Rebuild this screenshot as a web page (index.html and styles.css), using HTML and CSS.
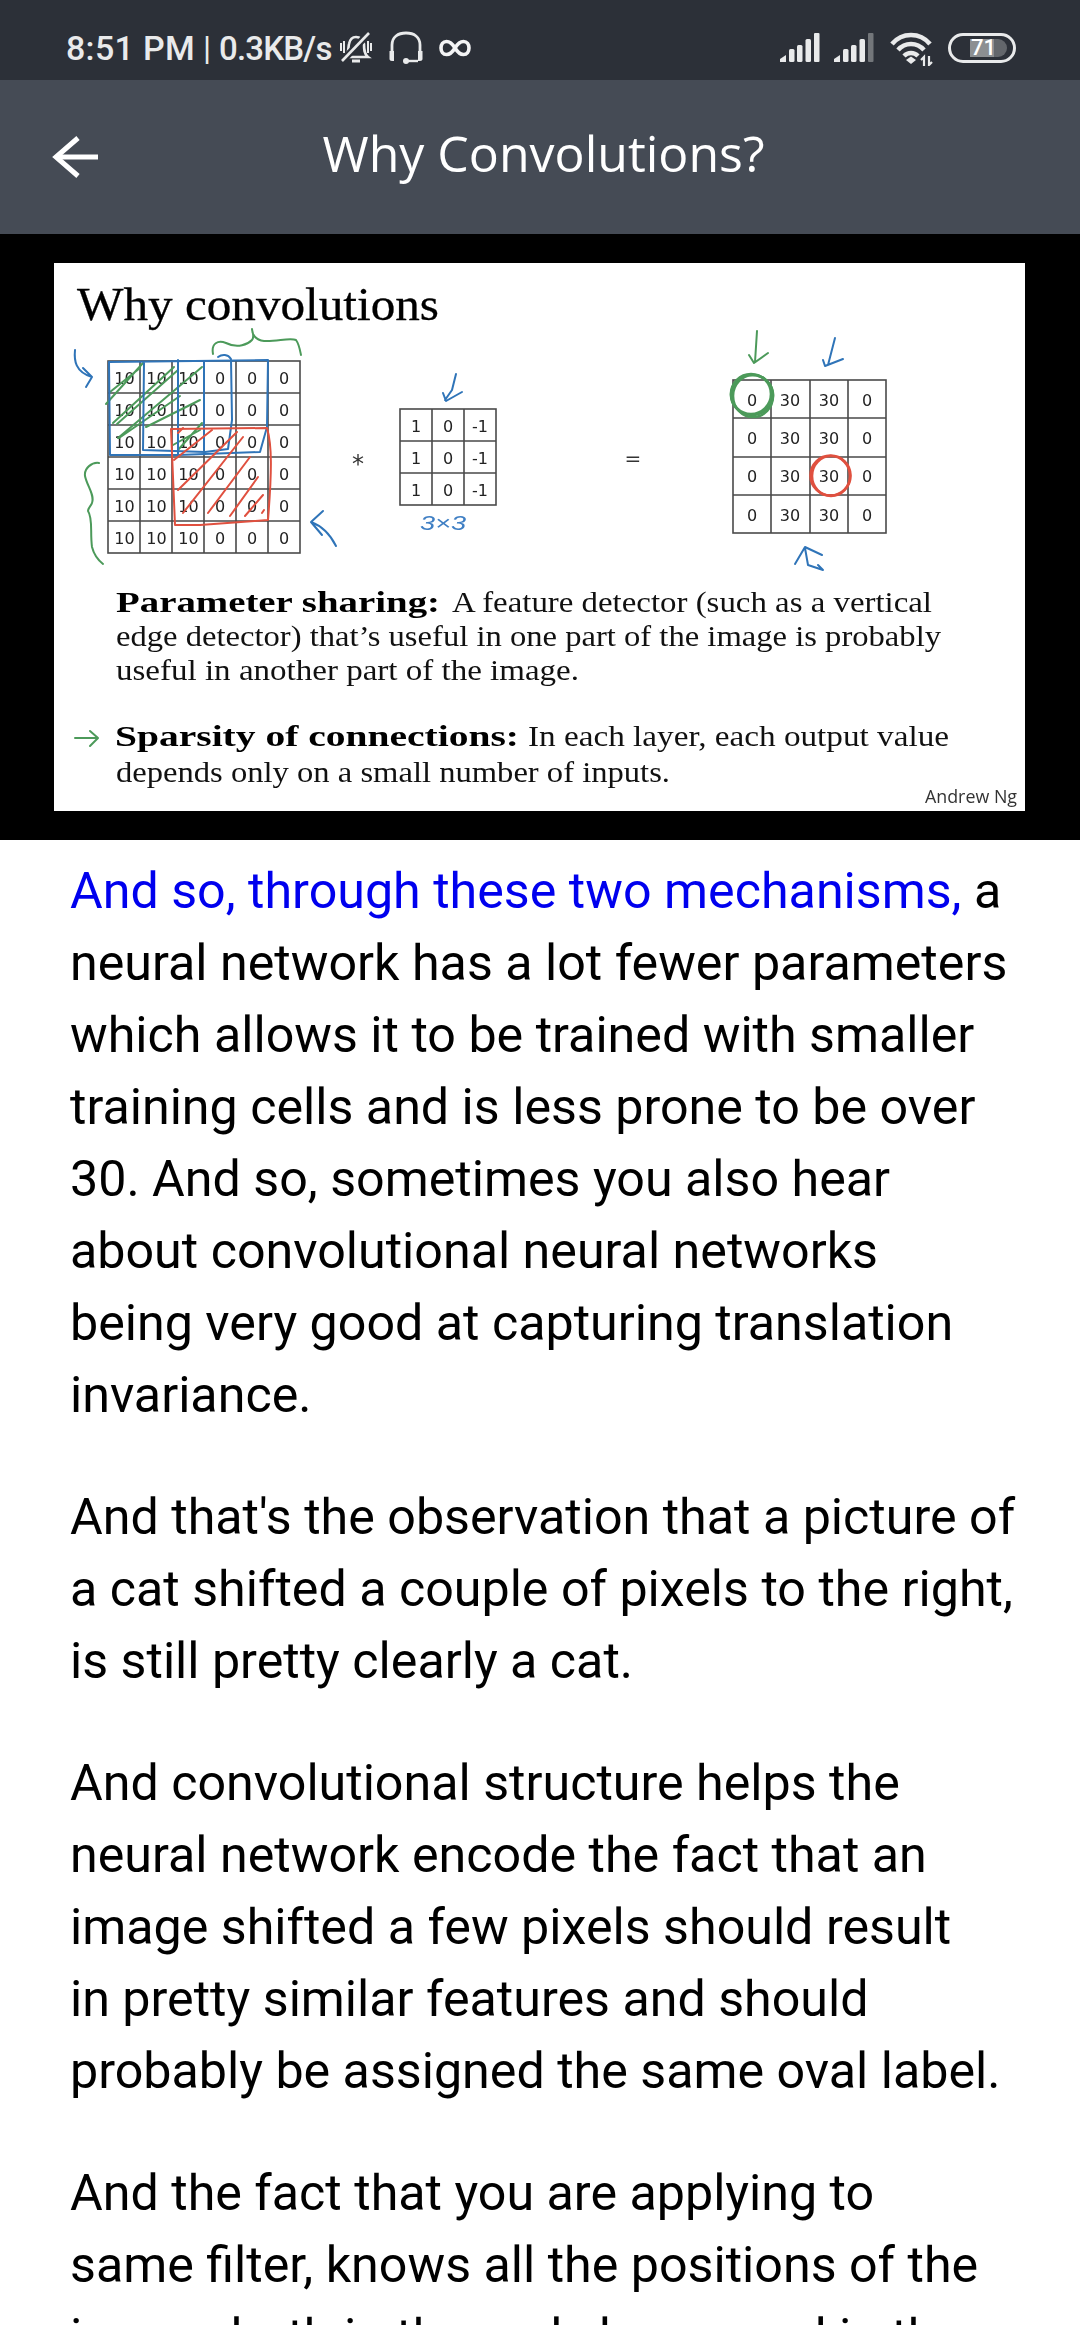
FILE: index.html
```html
<!DOCTYPE html>
<html lang="en">
<head>
    <meta charset="UTF-8">
    <meta name="viewport" content="width=device-width, initial-scale=1.0">
    <title>Why Convolutions?</title>
    <link rel="stylesheet" href="styles.css">
</head>
<body>

    <div class="status-bar">
        <div class="status-left">
            <span class="clock">8:51 PM</span>
            <span class="sep">|</span>
            <span class="speed">0.3KB/s</span>
            <!-- muted bell -->
            <svg class="icon-bell" width="34" height="34" viewBox="0 0 34 34" fill="none" stroke="#e9eaeb" stroke-width="2.6">
                <path d="M6 26 C10 23 9 17 10 13 C11 8 14 6 17 6 C21 6 24 9 25 13 C25 18 25 23 29 26 Z"/>
                <path d="M13 30 H21" stroke-width="3"/>
                <path d="M2 12 V20 M5 10 V22 M29 10 V22 M32 12 V20" stroke-width="2"/>
                <path d="M3 30 L30 2" stroke="#2c3038" stroke-width="7"/>
                <path d="M3 30 L30 2"/>
            </svg>
            <!-- headset -->
            <svg class="icon-headset" width="36" height="34" viewBox="0 0 36 34" fill="none" stroke="#e9eaeb" stroke-width="2.8">
                <path d="M4 20 V14 C4 6 10 2 18 2 C26 2 32 6 32 14 V20"/>
                <path d="M1.5 20 H6 V30 H4 C2.500 30 1.500 29 1.500 28 Z M30 20 H34.500 V28 C34.500 29 33.500 30 32 30 H30 Z" fill="#e9eaeb" stroke="none"/>
                <path d="M18 30 H30" stroke-width="2.400"/>
                <circle cx="18" cy="30" r="3" fill="#e9eaeb" stroke="none"/>
            </svg>
            <!-- unlimited -->
            <svg class="icon-inf" width="32" height="18" viewBox="0 0 32 18" fill="none" stroke="#f4f4f5" stroke-width="3.600">
                <path d="M16 9 C13 4 10 2.500 7.500 2.500 C4 2.500 2 5.500 2 9 C2 12.500 4 15.500 7.500 15.500 C10 15.500 13 14 16 9 C19 4 22 2.500 24.500 2.500 C28 2.500 30 5.500 30 9 C30 12.500 28 15.500 24.500 15.500 C22 15.500 19 14 16 9 Z"/>
            </svg>
        </div>
        <div class="status-right">
            <svg width="40" height="30" viewBox="0 0 40 30" fill="#e9eaeb">
                <path d="M0 29 V26 L6 22 V29 Z"/>
                <rect x="9" y="16" width="5.500" height="13" rx="1.500"/>
                <rect x="17" y="12" width="5.500" height="17" rx="1.500"/>
                <rect x="25.500" y="6" width="5.500" height="23" rx="1.500"/>
                <rect x="34" y="0" width="5.500" height="29" rx="1"/>
            </svg>
            <svg width="40" height="30" viewBox="0 0 40 30" fill="#e9eaeb">
                <path d="M0 29 V26 L6 22 V29 Z"/>
                <rect x="9" y="16" width="5.500" height="13" rx="1.500"/>
                <rect x="17" y="12" width="5.500" height="17" rx="1.500"/>
                <rect x="25.500" y="6" width="5.500" height="23" rx="1.500"/>
                <rect x="34" y="0" width="5.500" height="29" rx="1" fill="#73767a"/>
            </svg>
            <svg class="icon-wifi" width="44" height="34" viewBox="0 0 44 34" fill="none" stroke="#e9eaeb" stroke-width="4.500">
                <path d="M2 12 C12 0 30 0 40 12"/>
                <path d="M8 18 C15 10 27 10 34 18"/>
                <path d="M14 24 C18 20 24 20 28 24"/>
                <path d="M16 28 L21 24.500 L26 28 L21 32 Z" fill="#e9eaeb" stroke="none"/>
                <path d="M34 34 V25 L31 28 M39 24 V33 L42 30" stroke-width="2.200"/>
            </svg>
            <div class="battery">
                <div class="battery-fill"><span class="battery-num">71</span></div>
            </div>
        </div>
    </div>

    <div class="app-bar">
        <svg class="back" width="48" height="48" viewBox="0 0 48 48" fill="none" stroke="#fff" stroke-width="5">
            <path d="M5 24 H47"/>
            <path d="M27 5 L5 24 L27 43"/>
        </svg>
        <h1 class="app-title">Why Convolutions?</h1>
    </div>

    <div class="video">
        <svg class="slide" width="971" height="548" viewBox="54 263 971 548">
            <rect x="54" y="263" width="971" height="548" fill="#fff"/>

            <text class="s-title" x="77" y="320" textLength="362" lengthAdjust="spacingAndGlyphs">Why convolutions</text>

            <!-- input matrix -->
            <g class="grid">
                <rect x="108" y="361" width="192" height="192"/>
                <path d="M140 361 V553 M172 361 V553 M204 361 V553 M236 361 V553 M268 361 V553"/>
                <path d="M108 393 H300 M108 425 H300 M108 457 H300 M108 489 H300 M108 521 H300"/>
            </g>
            <text class="cell" y="384"><tspan x="124.500">10</tspan><tspan x="156.500">10</tspan><tspan x="188.500">10</tspan><tspan x="220">0</tspan><tspan x="252">0</tspan><tspan x="284">0</tspan></text>
            <text class="cell" y="416"><tspan x="124.500">10</tspan><tspan x="156.500">10</tspan><tspan x="188.500">10</tspan><tspan x="220">0</tspan><tspan x="252">0</tspan><tspan x="284">0</tspan></text>
            <text class="cell" y="448"><tspan x="124.500">10</tspan><tspan x="156.500">10</tspan><tspan x="188.500">10</tspan><tspan x="220">0</tspan><tspan x="252">0</tspan><tspan x="284">0</tspan></text>
            <text class="cell" y="480"><tspan x="124.500">10</tspan><tspan x="156.500">10</tspan><tspan x="188.500">10</tspan><tspan x="220">0</tspan><tspan x="252">0</tspan><tspan x="284">0</tspan></text>
            <text class="cell" y="512"><tspan x="124.500">10</tspan><tspan x="156.500">10</tspan><tspan x="188.500">10</tspan><tspan x="220">0</tspan><tspan x="252">0</tspan><tspan x="284">0</tspan></text>
            <text class="cell" y="544"><tspan x="124.500">10</tspan><tspan x="156.500">10</tspan><tspan x="188.500">10</tspan><tspan x="220">0</tspan><tspan x="252">0</tspan><tspan x="284">0</tspan></text>

            <text class="op" x="358" y="472">*</text>

            <!-- filter -->
            <g class="grid">
                <rect x="400" y="409" width="96" height="96"/>
                <path d="M432 409 V505 M464 409 V505 M400 441 H496 M400 473 H496"/>
            </g>
            <text class="cell" y="432"><tspan x="416">1</tspan><tspan x="448">0</tspan><tspan x="480">-1</tspan></text>
            <text class="cell" y="464"><tspan x="416">1</tspan><tspan x="448">0</tspan><tspan x="480">-1</tspan></text>
            <text class="cell" y="496"><tspan x="416">1</tspan><tspan x="448">0</tspan><tspan x="480">-1</tspan></text>

            <text class="op-eq" x="633" y="465">=</text>

            <!-- output matrix -->
            <g class="grid">
                <rect x="733" y="380" width="153" height="153"/>
                <path d="M771 380 V533 M810 380 V533 M848 380 V533 M733 418 H886 M733 457 H886 M733 495 H886"/>
            </g>
            <text class="cell" y="406"><tspan x="752">0</tspan><tspan x="790">30</tspan><tspan x="829">30</tspan><tspan x="867">0</tspan></text>
            <text class="cell" y="444"><tspan x="752">0</tspan><tspan x="790">30</tspan><tspan x="829">30</tspan><tspan x="867">0</tspan></text>
            <text class="cell" y="482"><tspan x="752">0</tspan><tspan x="790">30</tspan><tspan x="829">30</tspan><tspan x="867">0</tspan></text>
            <text class="cell" y="521"><tspan x="752">0</tspan><tspan x="790">30</tspan><tspan x="829">30</tspan><tspan x="867">0</tspan></text>

            <!-- pen: green -->
            <g class="pen pen-green">
                <path d="M213 354 C211 343 218 340 226 343 C238 349 248 344 252 340 C255 336 252 332 252 329 C252 334 255 340 264 341 C276 342 290 337 296 340 C299 344 300 350 301 355"/>
                <path d="M99 463 C92 462 84 468 85 476 C87 486 95 495 92 503 C91 506 88 508 88 511 C93 518 90 532 92 547 C94 555 98 560 103 564"/>
                <path d="M106 404 L143 363 M110 392 L140 368 M113 423 L174 367 M117 424 L178 370 M118 438 L202 367 M146 427 L200 400 M119 438 L180 396 M178 450 L202 423 M173 445 L200 430"/>
                <g class="pen-thick">
                    <ellipse cx="752" cy="395" rx="21" ry="20"/>
                    <ellipse cx="753" cy="396" rx="20" ry="21"/>
                    <ellipse cx="751" cy="394" rx="20" ry="20"/>
                </g>
                <path d="M757 331 L755 362 M749 355 L754 363 L768 353"/>
                <path d="M75 738 H97 M90 731 L98 738 L90 746"/>
            </g>

            <!-- pen: blue -->
            <g class="pen pen-blue">
                <path d="M75 350 C74 360 75 372 92 377 M83 368 L92 377 L86 387"/>
                <path d="M109 362 L268 360 L267 427 L260 452 L178 455 L110 455 Z"/>
                <path d="M144 363 L143 450 L205 452 L228 449 L232 420 L231 360"/>
                <path d="M204 362 L204 450 M178 360 L178 455"/>
                <path d="M218 357 C222 354 228 354 231 359"/>
                <path d="M456 374 L452 390 L445 400 M443 393 L446 401 L462 392"/>
                <path d="M311 522 L323 511 M311 522 L322 535 M311 522 C322 526 330 534 336 546"/>
                <path d="M835 338 L828 365 M823 360 L825 366 L843 359"/>
                <path d="M795 564 L805 547 L822 555 M805 548 L808 565 L823 570 L818 565"/>
            </g>
            <text class="hand" x="420" y="530" textLength="46" lengthAdjust="spacingAndGlyphs">3×3</text>

            <!-- pen: red -->
            <g class="pen pen-red">
                <path d="M171 429 L267 428 C272 445 272 470 268 520 L200 525 L175 525 Z"/>
                <path d="M178 433 L183 428 M174 460 L212 430 M178 490 L237 432 M183 513 L243 437 M208 513 L250 457 M230 516 L258 477 M245 516 L263 495 M262 513 L264 510"/>
                <g class="pen-thick">
                    <ellipse cx="830.500" cy="475.500" rx="20" ry="20"/>
                    <ellipse cx="831" cy="476" rx="19" ry="20"/>
                </g>
            </g>

            <text class="s-body s-bold" x="116" y="612" textLength="324" lengthAdjust="spacingAndGlyphs">Parameter sharing:</text>
            <text class="s-body" x="452" y="612" textLength="480" lengthAdjust="spacingAndGlyphs">A feature detector (such as a vertical</text>
            <text class="s-body" x="116" y="646" textLength="825" lengthAdjust="spacingAndGlyphs">edge detector) that’s useful in one part of the image is probably</text>
            <text class="s-body" x="116" y="680" textLength="463" lengthAdjust="spacingAndGlyphs">useful in another part of the image.</text>
            <text class="s-body s-bold" x="115" y="746" textLength="404" lengthAdjust="spacingAndGlyphs">Sparsity of connections:</text>
            <text class="s-body" x="528" y="746" textLength="421" lengthAdjust="spacingAndGlyphs">In each layer, each output value</text>
            <text class="s-body" x="116" y="782" textLength="554" lengthAdjust="spacingAndGlyphs">depends only on a small number of inputs.</text>
            <text class="s-credit" x="925" y="803" textLength="92" lengthAdjust="spacingAndGlyphs">Andrew Ng</text>
        </svg>
    </div>

    <div class="transcript">
        <p><span class="current">And so, through these two mechanisms,</span> a neural network has a lot fewer parameters which allows it to be trained with smaller training cells and is less prone to be over 30. And so, sometimes you also hear about convolutional neural networks<br>being very good at capturing translation invariance.</p>
        <p>And that's the observation that a picture of a cat shifted a couple of pixels to the right, is still pretty clearly a cat.</p>
        <p>And convolutional structure helps the neural network encode the fact that an image shifted a few pixels should result<br>in pretty similar features and should probably be assigned the same oval label.</p>
        <p>And the fact that you are applying to<br>same filter, knows all the positions of the<br>image, both in the early layers and in the late layers.</p>
    </div>

</body>
</html>
```

FILE: styles.css
```css
html, body {
    margin: 0;
    padding: 0;
    background-color: #fff;
}
body {
    width: 1080px;
    height: 2340px;
    display: flex;
    flex-direction: column;
    overflow: hidden;
    font-family: Roboto, sans-serif;
}

/* status bar */
.status-bar {
    height: 80px;
    flex: none;
    box-sizing: border-box;
    padding: 16px 64px 0 66px;
    display: flex;
    justify-content: space-between;
    align-items: center;
    background-color: #2c3038;
    color: #e9eaeb;
}
.status-left {
    display: flex;
    align-items: center;
    font-size: 33px;
    font-weight: 500;
}
.clock {
    font-size: 34px;
    letter-spacing: 0.3px;
}
.speed {
    letter-spacing: -0.8px;
}
.sep {
    margin: 0 8px;
    font-weight: 400;
}
.icon-bell {
    margin-left: 7px;
}
.icon-headset {
    margin-left: 15px;
}
.icon-inf {
    margin: 0 0 1px 15px;
}
.status-right {
    display: flex;
    align-items: center;
    gap: 14px;
}
.icon-wifi {
    margin: 2px 0 0 2px;
}
.battery {
    width: 68px;
    height: 30px;
    box-sizing: border-box;
    border: 3px solid #e9eaeb;
    border-radius: 15px;
    padding: 3px 6px 3px 19px;
}
.battery-fill {
    height: 100%;
    border-radius: 0 9px 9px 0;
    background: linear-gradient(to right, #8c8f92 0 66%, #63666b 66%);
}
.battery-num {
    display: block;
    font-size: 22px;
    line-height: 18px;
    font-weight: 500;
    color: #fff;
    padding-left: 1px;
}

/* app bar */
.app-bar {
    height: 154px;
    flex: none;
    position: relative;
    display: flex;
    align-items: center;
    justify-content: center;
    background-color: #454b55;
}
.back {
    position: absolute;
    left: 51px;
    top: 53px;
}
.app-title {
    margin: 0 0 8px 7px;
    font-family: "Open Sans", sans-serif;
    font-size: 50px;
    font-weight: 400;
    color: #fff;
}

/* video frame */
.video {
    height: 606px;
    flex: none;
    box-sizing: border-box;
    padding: 29px 55px 29px 54px;
    background-color: #000;
}
.slide {
    display: block;
    filter: blur(0.4px);
}
.s-title {
    font-family: "Liberation Serif", serif;
    font-size: 46px;
    fill: #000;
    stroke: #000;
    stroke-width: 0.3;
}
.s-body {
    font-family: "Liberation Serif", serif;
    font-size: 30px;
    fill: #111;
}
.s-bold {
    font-weight: 700;
    fill: #000;
}
.s-credit {
    font-family: "Open Sans", sans-serif;
    font-size: 18px;
    fill: #333;
}
.grid {
    fill: none;
    stroke: #4a4a4a;
    stroke-width: 1.6;
}
.cell {
    font-family: "DejaVu Sans", sans-serif;
    font-size: 16px;
    fill: #222;
    text-anchor: middle;
}
.op {
    font-family: "DejaVu Sans", sans-serif;
    font-size: 24px;
    fill: #333;
    text-anchor: middle;
}
.op-eq {
    font-family: "DejaVu Sans", sans-serif;
    font-size: 20px;
    fill: #333;
    text-anchor: middle;
}
.hand {
    font-family: "Liberation Sans", sans-serif;
    font-style: italic;
    font-size: 20px;
    fill: #3f7fc4;
}
.pen {
    fill: none;
    stroke-width: 2;
    stroke-linecap: round;
    stroke-linejoin: round;
}
.pen-thick {
    stroke-width: 2.6;
}
.pen-green {
    stroke: #4c9a5a;
}
.pen-blue {
    stroke: #2f74b8;
}
.pen-red {
    stroke: #e0503f;
}

/* transcript text */
.transcript {
    height: 1485px;
    flex: none;
    overflow: hidden;
    box-sizing: border-box;
    padding: 15px 62px 0 70px;
    font-size: 50.2px;
    line-height: 72px;
    color: #000;
}
.transcript p {
    margin: 0 0 50px;
}
.current {
    color: #0000ee;
}
```
